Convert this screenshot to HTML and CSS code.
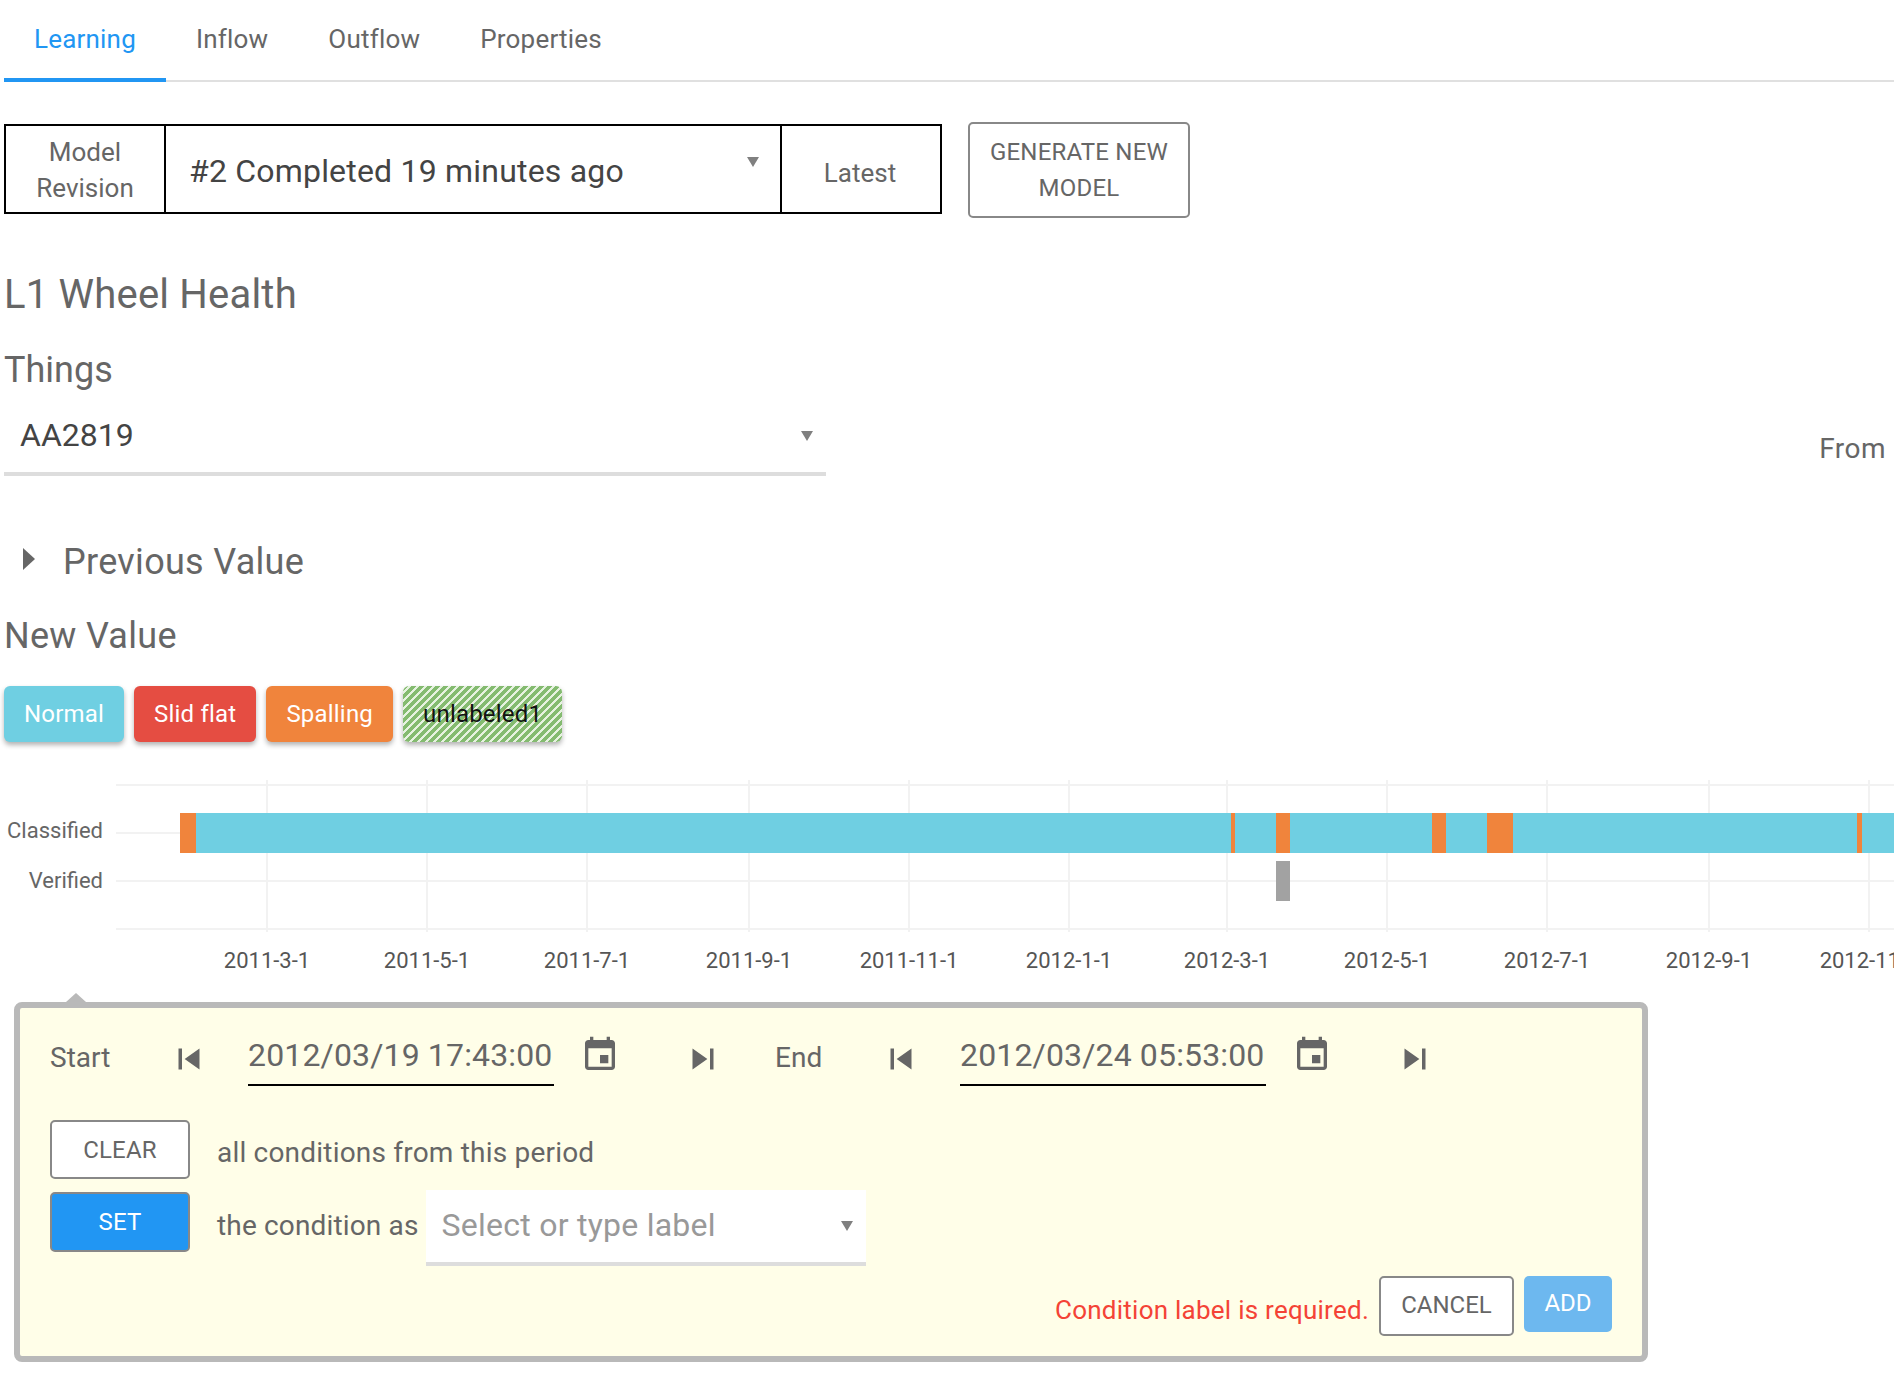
FILE: index.html
```html
<!DOCTYPE html>
<html lang="en">
<head>
    <meta charset="UTF-8">
    <title>Learning</title>
    <link rel="stylesheet" href="styles.css">
</head>
<body>
    <!-- tabs -->
    <nav class="tabs">
        <div class="tab active">Learning</div>
        <div class="tab">Inflow</div>
        <div class="tab">Outflow</div>
        <div class="tab">Properties</div>
    </nav>

    <!-- model revision -->
    <div class="model_row">
        <div class="model_box">
            <div class="model_label">Model<br>Revision</div>
            <div class="model_select">#2 Completed 19 minutes ago<span class="caret"></span></div>
            <div class="model_latest">Latest</div>
        </div>
        <div class="btn btn_generate">GENERATE NEW<br>MODEL</div>
    </div>

    <h1 class="title">L1 Wheel Health</h1>
    <h2 class="things_title">Things</h2>

    <div class="things_row">
        <div class="things_select">AA2819<span class="caret"></span></div>
        <div class="from">From</div>
    </div>

    <div class="previous">
        <span class="expand"></span>
        <span>Previous Value</span>
    </div>
    <div class="new_value">New Value</div>

    <div class="chips">
        <div class="chip normal">Normal</div>
        <div class="chip slid">Slid flat</div>
        <div class="chip spalling">Spalling</div>
        <div class="chip unlabeled">unlabeled1</div>
    </div>

    <!-- timeline -->
    <svg class="chart" width="1894" height="232" viewBox="0 770 1894 232">
        <g class="grid">
            <path d="M116 785H1894M116 833H180M116 881H1894M116 929H1894"/>
            <path d="M267 780V932M427 780V932M587 780V932M749 780V932M909 780V932M1069 780V932M1227 780V932M1387 780V932M1547 780V932M1709 780V932M1869 780V932"/>
        </g>
        <rect class="c_normal" x="196" y="813" width="1698" height="40"/>
        <rect class="c_spalling" x="180" y="813" width="16" height="40"/>
        <rect class="c_spalling" x="1231" y="813" width="4" height="40"/>
        <rect class="c_spalling" x="1276" y="813" width="14" height="40"/>
        <rect class="c_spalling" x="1432" y="813" width="14" height="40"/>
        <rect class="c_spalling" x="1487" y="813" width="26" height="40"/>
        <rect class="c_spalling" x="1857" y="813" width="5" height="40"/>
        <rect class="c_verified" x="1276" y="861" width="14" height="40"/>
        <text class="row_label" x="103" y="838">Classified</text>
        <text class="row_label" x="103" y="888">Verified</text>
        <g class="axis">
            <text x="267" y="968">2011-3-1</text>
            <text x="427" y="968">2011-5-1</text>
            <text x="587" y="968">2011-7-1</text>
            <text x="749" y="968">2011-9-1</text>
            <text x="909" y="968">2011-11-1</text>
            <text x="1069" y="968">2012-1-1</text>
            <text x="1227" y="968">2012-3-1</text>
            <text x="1387" y="968">2012-5-1</text>
            <text x="1547" y="968">2012-7-1</text>
            <text x="1709" y="968">2012-9-1</text>
            <text x="1869" y="968">2012-11-1</text>
        </g>
    </svg>

    <!-- selected period -->
    <div class="panel">
        <div class="panel_arrow"></div>
        <div class="range">
            <div class="range_label start">Start</div>
            <svg class="icon skip" viewBox="0 0 24 24"><path d="M6 6h2v12H6zm3.5 6l8.5 6V6z"/></svg>
            <div class="date">2012/03/19 17:43:00</div>
            <svg class="icon cal" viewBox="0 0 24 24"><path d="M17 12h-5v5h5v-5zM16 1v2H8V1H6v2H5c-1.11 0-1.99.9-1.99 2L3 19c0 1.1.89 2 2 2h14c1.1 0 2-.9 2-2V5c0-1.1-.9-2-2-2h-1V1h-2zm3 18H5V8h14v11z"/></svg>
            <svg class="icon skip next" viewBox="0 0 24 24"><path d="M6 18l8.5-6L6 6v12zM16 6v12h2V6h-2z"/></svg>
            <div class="range_label end">End</div>
            <svg class="icon skip" viewBox="0 0 24 24"><path d="M6 6h2v12H6zm3.5 6l8.5 6V6z"/></svg>
            <div class="date">2012/03/24 05:53:00</div>
            <svg class="icon cal" viewBox="0 0 24 24"><path d="M17 12h-5v5h5v-5zM16 1v2H8V1H6v2H5c-1.11 0-1.99.9-1.99 2L3 19c0 1.1.89 2 2 2h14c1.1 0 2-.9 2-2V5c0-1.1-.9-2-2-2h-1V1h-2zm3 18H5V8h14v11z"/></svg>
            <svg class="icon skip next" viewBox="0 0 24 24"><path d="M6 18l8.5-6L6 6v12zM16 6v12h2V6h-2z"/></svg>
        </div>

        <div class="action action_clear">
            <div class="btn btn_mode">CLEAR</div>
            <div class="action_text">all conditions from this period</div>
        </div>
        <div class="action action_set">
            <div class="btn btn_mode btn_blue">SET</div>
            <div class="action_text">the condition as</div>
            <div class="label_select">Select or type label<span class="caret"></span></div>
        </div>

        <div class="panel_foot">
            <div class="error">Condition label is required.</div>
            <div class="btn btn_cancel">CANCEL</div>
            <div class="btn btn_add">ADD</div>
        </div>
    </div>
</body>
</html>
```

FILE: styles.css
```css
*{
    box-sizing: border-box;
}
body{
    margin: 0;
    width: 1894px;
    height: 1378px;
    overflow: hidden;
    background-color: white;
    color: #666;
    font-family: Roboto, "Liberation Sans", sans-serif;
    font-size: 28px;
}

/* tabs */
.tabs{
    display: flex;
    height: 82px;
    margin-left: 4px;
    border-bottom: 2px solid #e0e0e0;
}
.tab{
    height: 82px;
    padding: 0 30px;
    font-size: 26px;
    line-height: 79px;
    letter-spacing: 0.2px;
}
.tab.active{
    color: #2196f3;
    border-bottom: 4px solid #2196f3;
}

/* model revision */
.model_row{
    display: flex;
    align-items: flex-start;
    margin: 40px 0 0 4px;
}
.model_box{
    display: flex;
    width: 938px;
    height: 90px;
    margin-top: 2px;
    border: 2px solid black;
    font-size: 26px;
}
.model_label{
    width: 160px;
    border-right: 2px solid black;
    text-align: center;
    line-height: 36px;
    padding-top: 8px;
}
.model_select{
    position: relative;
    width: 616px;
    padding-left: 23px;
    border-right: 2px solid black;
    color: #444;
    font-size: 32px;
    line-height: 90px;
    letter-spacing: 0.2px;
}
.model_latest{
    flex: 1;
    padding-right: 2px;
    text-align: center;
    line-height: 94px;
}
.caret{
    position: absolute;
    width: 0;
    height: 0;
    border-left: 6px solid transparent;
    border-right: 6px solid transparent;
    border-top: 10px solid #808080;
}
.model_select .caret{
    right: 21px;
    top: 31px;
}
.btn{
    border: 2px solid #888;
    border-radius: 5px;
    background-color: white;
    text-align: center;
    font-size: 24px;
}
.btn_generate{
    width: 222px;
    height: 96px;
    margin-left: 26px;
    line-height: 36px;
    padding-top: 10px;
    letter-spacing: 0.2px;
}

.title{
    margin: 53px 0 0 4px;
    font-size: 40px;
    font-weight: 400;
    line-height: 48px;
    letter-spacing: 0.2px;
}
.things_title{
    margin: 29px 0 0 4px;
    font-size: 36px;
    font-weight: 400;
    line-height: 44px;
}
.things_row{
    display: flex;
    justify-content: space-between;
    align-items: flex-end;
    padding: 3px 8px 0 4px;
}
.things_select{
    position: relative;
    width: 822px;
    height: 81px;
    padding: 0 0 0 16px;
    border-bottom: 4px solid #ddd;
    color: #444;
    font-size: 32px;
    line-height: 80px;
}
.things_select .caret{
    right: 13px;
    top: 36px;
}
.from{
    font-size: 28px;
    line-height: 44px;
    margin-bottom: 5px;
    letter-spacing: 0.5px;
}

.previous{
    display: flex;
    align-items: center;
    margin: 64px 0 0 23px;
    font-size: 36px;
    line-height: 44px;
    letter-spacing: 0.3px;
}
.expand{
    width: 0;
    height: 0;
    margin: -6px 28px 0 0;
    border-top: 11px solid transparent;
    border-bottom: 11px solid transparent;
    border-left: 12px solid #666;
}
.new_value{
    margin: 30px 0 0 4px;
    font-size: 36px;
    line-height: 44px;
    letter-spacing: 0.3px;
}

/* condition chips */
.chips{
    display: flex;
    gap: 10px;
    margin: 28px 0 0 4px;
}
.chip{
    height: 56px;
    padding: 0 20px;
    border-radius: 6px;
    color: white;
    font-size: 24px;
    line-height: 56px;
    letter-spacing: 0.2px;
    box-shadow: 0 3px 5px rgba(0, 0, 0, 0.3);
}
.normal{
    background-color: #6fcfe2;
}
.slid{
    background-color: #e54d42;
}
.spalling{
    background-color: #f0843c;
}
.unlabeled{
    color: #111;
    background: repeating-linear-gradient(135deg, #84bb70 0, #84bb70 3.8px, #e6f2e0 3.8px, #e6f2e0 5.66px);
}

/* timeline */
.chart{
    display: block;
    margin-top: 28px;
    font-size: 22px;
}
.grid path{
    fill: none;
    stroke: #f2f2f2;
    stroke-width: 2;
}
.c_normal{
    fill: #6fcfe2;
}
.c_spalling{
    fill: #f0843c;
}
.c_verified{
    fill: #a2a2a2;
}
.row_label{
    fill: #666;
    text-anchor: end;
}
.axis text{
    fill: #555;
    text-anchor: middle;
}

/* selected period */
.panel{
    position: relative;
    width: 1634px;
    height: 360px;
    margin-left: 14px;
    padding: 22px 30px 0;
    border: 6px solid #b9b9b9;
    border-radius: 8px;
    background-color: #fffee8;
}
.panel_arrow{
    position: absolute;
    left: 46px;
    top: -15px;
    width: 0;
    height: 0;
    border-left: 10px solid transparent;
    border-right: 10px solid transparent;
    border-bottom: 9px solid #b9b9b9;
}
.range{
    display: flex;
    align-items: center;
    height: 56px;
}
.range_label{
    margin-bottom: 2px;
}
.start{
    width: 118px;
}
.end{
    width: 105px;
    margin-left: 51px;
}
.icon{
    flex: none;
    fill: #666;
}
.skip{
    width: 42px;
    height: 42px;
    margin-top: 1px;
}
.cal{
    width: 40px;
    height: 40px;
    margin: -6px 0 0 26px;
}
.next{
    margin-left: 62px;
}
.date{
    width: 306px;
    height: 56px;
    margin-left: 38px;
    border-bottom: 2px solid black;
    font-size: 32px;
    line-height: 50px;
    letter-spacing: 0.15px;
    white-space: nowrap;
}
.action{
    display: flex;
    align-items: flex-start;
}
.action_clear{
    margin-top: 34px;
    height: 72px;
}
.action_set{
    height: 74px;
}
.btn_mode{
    width: 140px;
    height: 59px;
    line-height: 56px;
    letter-spacing: 0.2px;
}
.action_set .btn_mode{
    height: 60px;
    line-height: 56px;
}
.btn_blue{
    color: white;
    background-color: #2196f3;
}
.action_text{
    margin-left: 27px;
    line-height: 66px;
    letter-spacing: 0.2px;
}
.action_set .action_text{
    line-height: 68px;
    letter-spacing: 0.15px;
}
.label_select{
    position: relative;
    width: 440px;
    height: 76px;
    margin: -2px 0 0 7px;
    padding-left: 16px;
    border-bottom: 4px solid #ddd;
    background-color: white;
    color: #999;
    font-size: 32px;
    line-height: 70px;
    letter-spacing: 0.25px;
}
.label_select .caret{
    right: 13px;
    top: 31px;
}
.panel_foot{
    display: flex;
    justify-content: flex-end;
    align-items: flex-start;
    margin-top: 10px;
}
.error{
    margin-right: 10px;
    color: #f44336;
    font-size: 26px;
    line-height: 68px;
    letter-spacing: 0.25px;
}
.btn_cancel{
    width: 135px;
    height: 60px;
    line-height: 55px;
}
.btn_add{
    width: 88px;
    height: 56px;
    margin-left: 10px;
    border: none;
    background-color: #6db8ef;
    color: white;
    line-height: 55px;
}
```
